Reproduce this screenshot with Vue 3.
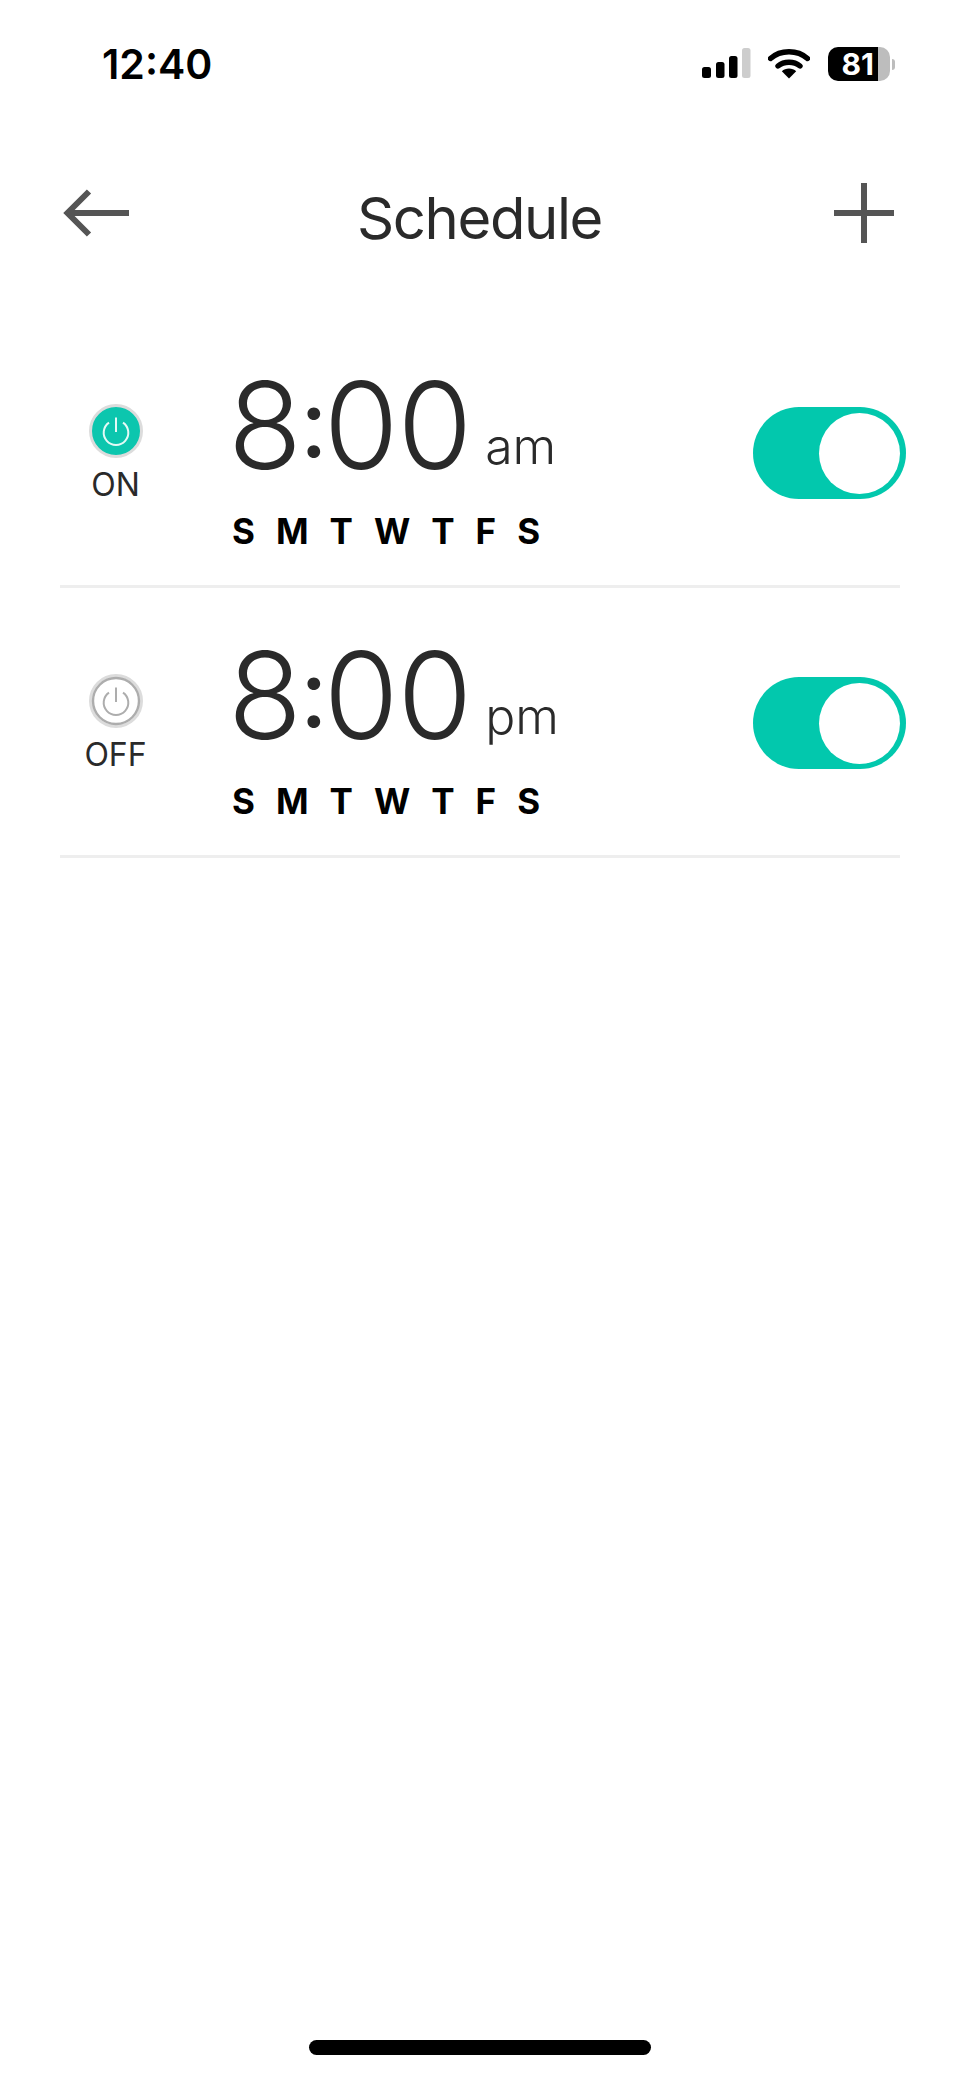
<template>
  <div class="screen">
    <div class="status-bar">
      <span class="clock">12:40</span>
      <div class="status-icons">
        <svg class="signal" width="50" height="32" viewBox="0 0 50 32">
          <rect x="0" y="20" width="9" height="11" rx="2.5" fill="#000" />
          <rect x="14" y="15" width="8.5" height="16" rx="2.5" fill="#000" />
          <rect x="27" y="9" width="8.5" height="22" rx="2.5" fill="#000" />
          <rect x="40" y="1" width="8.5" height="30" rx="2.5" fill="#cdcdcd" />
        </svg>
        <svg class="wifi" width="42" height="32" viewBox="0 0 42 32">
          <path d="M2.5 11.5C12.5 2.5 29.5 2.5 39.5 11.5" fill="none" stroke="#000" stroke-width="5.4" stroke-linecap="round" />
          <path d="M10 19C16 14 26 14 32 19" fill="none" stroke="#000" stroke-width="5.4" stroke-linecap="round" />
          <path d="M13.8 24.2C17.5 20.6 24.5 20.6 28.2 24.2L21 31.6Z" fill="#000" />
        </svg>
        <div class="battery">
          <div class="battery-body">
            <span class="battery-level">81</span>
            <span class="battery-rest"></span>
          </div>
          <span class="battery-nub"></span>
        </div>
      </div>
    </div>

    <header class="nav">
      <svg width="66" height="48" viewBox="0 0 66 48">
        <path d="M66 24H5M26 2.5L4.5 24L26 45.5" fill="none" stroke="#555" stroke-width="6" />
      </svg>
      <h1>Schedule</h1>
      <svg width="60" height="60" viewBox="0 0 60 60">
        <path d="M30 0V60M0 30H60" fill="none" stroke="#555" stroke-width="6" />
      </svg>
    </header>

    <div class="list">
      <div v-for="item in schedules" :key="item.period" class="row">
        <div class="action" :class="{ off: !item.on }">
          <svg width="54" height="54" viewBox="0 0 54 54">
            <circle cx="27" cy="27" r="25.5" :fill="item.on ? '#0cc6ae' : '#fff'" stroke="#dcdcdc" stroke-width="3" />
            <circle v-if="!item.on" cx="27" cy="27" r="23" fill="none" stroke="#adadad" stroke-width="2.4" />
            <path d="M20 18.6A12.3 12.3 0 1 0 34 18.6M27 13.5V28" fill="none" :stroke="item.on ? '#e4faf6' : '#adadad'" stroke-width="2" />
          </svg>
          <span>{{ item.on ? 'ON' : 'OFF' }}</span>
        </div>
        <div class="info">
          <div class="time">
            <span class="digits">8<span class="colon">:</span>00</span>
            <span class="period">{{ item.period }}</span>
          </div>
          <div class="days">
            <span v-for="(d, i) in days" :key="i">{{ d }}</span>
          </div>
        </div>
        <div class="toggle"><span class="knob"></span></div>
      </div>
    </div>

    <div class="home-indicator"></div>
  </div>
</template>

<script setup>
const days = ['S', 'M', 'T', 'W', 'T', 'F', 'S']

const schedules = [
  { period: 'am', on: true },
  { period: 'pm', on: false }
]
</script>

<style>
html,
body {
  margin: 0;
  background: #fff;
}
</style>

<style scoped>
.screen {
  width: 960px;
  height: 2079px;
  display: flex;
  flex-direction: column;
  background: #fff;
  font-family: Inter, "Liberation Sans", sans-serif;
  color: #2a2a2a;
  overflow: hidden;
}

.status-bar {
  height: 128px;
  box-sizing: border-box;
  padding: 40px 65px 0 102px;
  display: flex;
  justify-content: space-between;
  align-items: flex-start;
}

.clock {
  font-size: 41px;
  font-weight: 600;
  line-height: 48px;
  color: #000;
}

.status-icons {
  display: flex;
  align-items: flex-start;
  padding-top: 7px;
}

.wifi {
  margin-left: 16px;
}

.battery {
  margin-left: 18px;
  display: flex;
  align-items: center;
}

.battery-body {
  display: flex;
  width: 62px;
  height: 34px;
  border-radius: 10px;
  overflow: hidden;
}

.battery-level {
  width: 50px;
  background: #000;
  color: #fff;
  font-size: 30px;
  font-weight: 700;
  line-height: 34px;
  text-align: right;
  padding-right: 4px;
  box-sizing: border-box;
}

.battery-rest {
  flex: 1;
  background: #bdbdbd;
}

.battery-nub {
  width: 3px;
  height: 11px;
  margin-left: 2px;
  background: #bdbdbd;
  border-radius: 0 3px 3px 0;
}

.nav {
  height: 170px;
  padding: 0 66px 0 63px;
  display: flex;
  justify-content: space-between;
  align-items: center;
  box-sizing: border-box;
}

.nav h1 {
  margin: 10px 4px 0 0;
  font-size: 58px;
  font-weight: 400;
  line-height: 68px;
  letter-spacing: -1.4px;
  color: #2a2a2a;
}

.list {
  margin: 20px 60px 0;
}

.row {
  height: 270px;
  box-sizing: border-box;
  border-bottom: 3px solid #eeeeee;
  display: flex;
  align-items: flex-start;
}

.action {
  width: 111px;
  padding-top: 86px;
  display: flex;
  flex-direction: column;
  align-items: center;
  flex-shrink: 0;
}

.action span {
  margin-top: 8px;
  font-size: 32px;
  line-height: 38px;
  color: #2a2a2a;
}

.info {
  margin-left: 61px;
  padding-top: 40px;
  flex: 1;
}

.time {
  height: 134px;
  line-height: 134px;
  white-space: nowrap;
  margin-left: -4px;
}

.digits {
  font-size: 121px;
  font-weight: 280;
  line-height: 134px;
  letter-spacing: -1px;
  color: #2a2a2a;
}

.colon {
  font-size: 96px;
  font-weight: 400;
  line-height: 0;
  vertical-align: 12px;
  margin: 0 -3px 0 -1px;
}

.period {
  margin-left: 14px;
  font-size: 50px;
  font-weight: 300;
  line-height: 0;
  vertical-align: 5px;
  color: #2a2a2a;
}

.days {
  margin-top: 18px;
  display: flex;
  gap: 21px;
  font-size: 35px;
  font-weight: 700;
  line-height: 42px;
  color: #000;
}

.toggle {
  width: 153px;
  height: 92px;
  margin: 89px -6px 0 0;
  box-sizing: border-box;
  padding: 6px;
  border-radius: 46px;
  background: #02c8ad;
  display: flex;
  justify-content: flex-end;
  flex-shrink: 0;
}

.knob {
  width: 81px;
  height: 81px;
  border-radius: 50%;
  background: #fff;
}

.home-indicator {
  width: 342px;
  height: 15px;
  border-radius: 8px;
  background: #000;
  margin: auto auto 24px;
}
</style>
